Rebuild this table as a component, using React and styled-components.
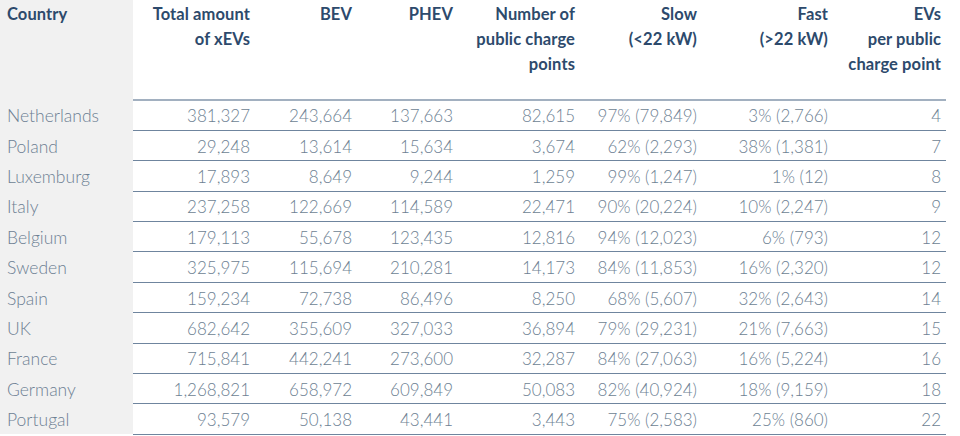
import React from "react";
import styled, { createGlobalStyle } from "styled-components";

const GlobalStyle = createGlobalStyle`
  html, body {
    margin: 0;
    padding: 0;
    background: #ffffff;
  }
  body {
    font-family: Lato, "Open Sans", sans-serif;
  }
  *, *::before, *::after {
    box-sizing: border-box;
  }
`;

const Table = styled.table`
  border-collapse: collapse;
  border-spacing: 0;
  table-layout: fixed;
  width: 946px;
`;

const HeadCell = styled.th`
  width: ${(p) => p.$w}px;
  height: 100px;
  padding: 2px 5px 0 ${(p) => (p.$first ? 7 : 5)}px;
  vertical-align: top;
  text-align: ${(p) => (p.$first ? "left" : "right")};
  font-size: 16.5px;
  font-weight: 700;
  line-height: 25px;
  letter-spacing: 0.1px;
  color: #2d4a6c;
  white-space: nowrap;
  background: ${(p) => (p.$first ? "#f1f1f1" : "transparent")};
  border-bottom: ${(p) => (p.$first ? "none" : "2px solid #a2b0c0")};
`;

const Row = styled.tr`
  height: 30.4px;
`;

const CountryCell = styled.td`
  padding: 1px 5px 0 7px;
  text-align: left;
  background: #f1f1f1;
  color: #6d7f93;
  font-size: 17.5px;
  font-weight: 300;
  white-space: nowrap;
`;

const ValueCell = styled.td`
  padding: 1px 5px 0;
  text-align: right;
  color: #6d7f93;
  font-size: 17px;
  font-weight: 300;
  white-space: nowrap;
  border-bottom: 1px solid #6f859e;
`;

const columns = [
  { w: 133, label: ["Country"] },
  { w: 122, label: ["Total amount", "of xEVs"] },
  { w: 102, label: ["BEV"] },
  { w: 101, label: ["PHEV"] },
  { w: 122, label: ["Number of", "public charge", "points"] },
  { w: 122, label: ["Slow", "(<22 kW)"] },
  { w: 131, label: ["Fast", "(>22 kW)"] },
  { w: 113, label: ["EVs", "per public", "charge point"] },
];

const rows = [
  ["Netherlands", "381,327", "243,664", "137,663", "82,615", "97% (79,849)", "3% (2,766)", "4"],
  ["Poland", "29,248", "13,614", "15,634", "3,674", "62% (2,293)", "38% (1,381)", "7"],
  ["Luxemburg", "17,893", "8,649", "9,244", "1,259", "99% (1,247)", "1% (12)", "8"],
  ["Italy", "237,258", "122,669", "114,589", "22,471", "90% (20,224)", "10% (2,247)", "9"],
  ["Belgium", "179,113", "55,678", "123,435", "12,816", "94% (12,023)", "6% (793)", "12"],
  ["Sweden", "325,975", "115,694", "210,281", "14,173", "84% (11,853)", "16% (2,320)", "12"],
  ["Spain", "159,234", "72,738", "86,496", "8,250", "68% (5,607)", "32% (2,643)", "14"],
  ["UK", "682,642", "355,609", "327,033", "36,894", "79% (29,231)", "21% (7,663)", "15"],
  ["France", "715,841", "442,241", "273,600", "32,287", "84% (27,063)", "16% (5,224)", "16"],
  ["Germany", "1,268,821", "658,972", "609,849", "50,083", "82% (40,924)", "18% (9,159)", "18"],
  ["Portugal", "93,579", "50,138", "43,441", "3,443", "75% (2,583)", "25% (860)", "22"],
];

function App() {
  return (
    <>
      <GlobalStyle />
      <Table>
        <thead>
          <tr>
            {columns.map((col, idx) => (
              <HeadCell key={idx} $w={col.w} $first={idx === 0}>
                {col.label.map((line, i) => (
                  <div key={i}>{line}</div>
                ))}
              </HeadCell>
            ))}
          </tr>
        </thead>
        <tbody>
          {rows.map((row) => (
            <Row key={row[0]}>
              <CountryCell>{row[0]}</CountryCell>
              {row.slice(1).map((val, i) => (
                <ValueCell key={i}>{val}</ValueCell>
              ))}
            </Row>
          ))}
        </tbody>
      </Table>
    </>
  );
}

export default App;
